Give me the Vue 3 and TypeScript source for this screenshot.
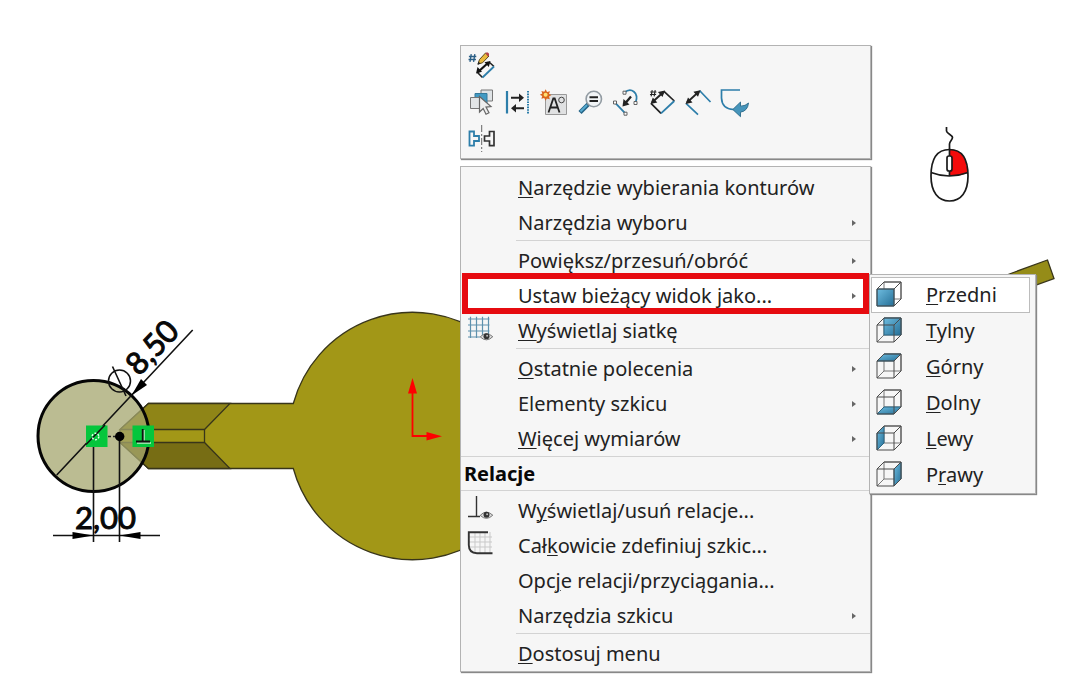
<script setup lang="ts">
interface Entry {
  label: string
  icon?: string
  sub?: boolean
  active?: boolean
}

interface Group {
  title?: string
  items: Entry[]
}

const tools: { id: string; name: string }[][] = [
  [{ id: 'autodim', name: 'Autowymiarowanie' }],
  [
    { id: 'select', name: 'Wybierz inny' },
    { id: 'flip', name: 'Zamień' },
    { id: 'note', name: 'Adnotacja' },
    { id: 'lens', name: 'Powiększ do wyboru' },
    { id: 'path', name: 'Ścieżka' },
    { id: 'smartdim', name: 'Inteligentny wymiar' },
    { id: 'chain', name: 'Łańcuch wymiarów' },
    { id: 'exit', name: 'Zakończ szkic' }
  ],
  [{ id: 'mirror', name: 'Lustro' }]
]

// An underscore precedes the access-key letter.
const groups: Group[] = [
  {
    items: [
      { label: '_Narzędzie wybierania konturów' },
      { label: 'Narzędzia wyboru', sub: true }
    ]
  },
  {
    items: [
      { label: 'Powiększ/przesuń/obróć', sub: true },
      { label: 'Ustaw bieżący widok jako...', sub: true, active: true },
      { label: '_Wyświetlaj siatkę', icon: 'grid' }
    ]
  },
  {
    items: [
      { label: '_Ostatnie polecenia', sub: true },
      { label: 'Elementy szkicu', sub: true },
      { label: '_Więcej wymiarów', sub: true }
    ]
  },
  {
    title: 'Relacje',
    items: [
      { label: 'W_yświetlaj/usuń relacje...', icon: 'relations' },
      { label: 'Cał_kowicie zdefiniuj szkic...', icon: 'define' },
      { label: 'Opc_je relacji/przyciągania...' },
      { label: 'Narzędzia szkicu', sub: true }
    ]
  },
  { items: [{ label: '_Dostosuj menu' }] }
]

const views: { label: string; face: string }[] = [
  { label: '_Przedni', face: '1,8 18,8 18,25 1,25' },
  { label: '_Tylny', face: '8,1 25,1 25,18 8,18' },
  { label: '_Górny', face: '1,8 8,1 25,1 18,8' },
  { label: '_Dolny', face: '1,25 8,18 25,18 18,25' },
  { label: '_Lewy', face: '1,8 8,1 8,18 1,25' },
  { label: 'P_rawy', face: '18,8 25,1 25,18 18,25' }
]

function parts(label: string): [string, string, string] {
  const i = label.indexOf('_')
  return i < 0 ? [label, '', ''] : [label.slice(0, i), label[i + 1], label.slice(i + 2)]
}
</script>

<template>
  <main class="stage">
    <svg class="defs" width="0" height="0" aria-hidden="true">
      <defs>
        <linearGradient id="face" x1="0" y1="0" x2="1" y2="1">
          <stop offset="0" stop-color="#6fbde0" />
          <stop offset="1" stop-color="#256f97" />
        </linearGradient>
        <symbol id="hash" viewBox="0 0 10 10">
          <path d="M3.6.8 2.2 9.2M7.6.8 6.2 9.2M1 3.3h8.2M.6 6.7h8.2" fill="none" stroke="currentColor" stroke-width="1.5" />
        </symbol>
        <symbol id="eye" viewBox="0 0 14 10">
          <path d="M.7 5.4Q6.5-1 13.3 5.2 7 11.4.7 5.4Z" fill="#ddd" stroke="#777" stroke-width="1" />
          <circle cx="7" cy="4.8" r="3" fill="#333" />
          <circle cx="7.6" cy="4.2" r="1" fill="#bbb" />
        </symbol>

        <symbol id="autodim" viewBox="0 0 36 36">
          <use href="#hash" x="5" y="5" width="9" height="10" color="#2b5f86" />
          <path d="m15 16 1.500-4.500L22.500 5l3.500 3-6.500 6.800Z" fill="#e9b93c" stroke="#5d4a1d" stroke-width="1" />
          <path d="m22.500 5 1.500-.8q2.500.5 2 3L24.800 8.500Z" fill="#b5424a" />
          <path d="m14.500 17 .8-3.500 2.300 2Z" fill="#222" />
          <path d="m14.500 24.500 5 5M26 14l5 4.500" stroke="#222" stroke-width="1.600" />
          <path d="M15 24 25.500 14.500" stroke="#111" stroke-width="2.200" />
          <path d="m13 25.500 1.500-6.500 4.500 4.700ZM27.500 13l-6 1.200 4.300 4.800Z" fill="#111" />
          <path d="M19.500 29.500 31 18.500" stroke="#2d7eaa" stroke-width="1.800" />
        </symbol>
        <symbol id="select" viewBox="0 0 36 36">
          <path d="M18 6h11.500v11H18Z" fill="#dfe3e6" stroke="#777" />
          <path d="M12 9.500h12v10H12Z" fill="#429ac3" stroke="#34799b" />
          <path d="M7.500 13.500H18v11H7.500Z" fill="#e2e5e7" stroke="#777" />
          <path d="m16.500 12.500 11.500 10-5 .6 3 5.600-3 1.500-2.800-5.700-3.700 3.500Z" fill="#eee" stroke="#666" stroke-width="1.200" />
        </symbol>
        <symbol id="flip" viewBox="0 0 36 36">
          <path d="M8 7v22.500" stroke="#2d7eaa" stroke-width="2.200" />
          <path d="M29 7v22.500" stroke="#2d7eaa" stroke-width="2" stroke-dasharray="1.600 1" />
          <path d="M12 13.700h10M15 24.300h10" stroke="#222" stroke-width="2" />
          <path d="m20 9.500 5 4.200-5 4.200ZM17 20l-5 4.300 5 4.200Z" fill="#222" />
        </symbol>
        <symbol id="note" viewBox="0 0 36 36">
          <path d="M10.500 10.500h21v20h-21Z" fill="#e0e1e2" stroke="#999" />
          <path d="m13.500 28.500 4.800-14h1.400l4.800 14M15.300 23.500h7.400" fill="none" stroke="#222" stroke-width="1.800" />
          <circle cx="26.500" cy="16" r="2.800" fill="none" stroke="#444" />
          <path d="M10.700 5.300 12 8l3-.8-1 2.800 2.500 1-2.500 1.500.8 2.700-3-.8-1.200 2.300L9.200 14l-2.800.8.800-2.800-2.400-1.300 2.500-1.100-.9-2.700 2.900.8Z" fill="#da671d" />
          <circle cx="10.600" cy="10.700" r="2" fill="#ffe072" />
        </symbol>
        <symbol id="lens" viewBox="0 0 36 36">
          <path d="m17.500 20-8.500 8.500" stroke="#256487" stroke-width="4.500" />
          <path d="m16 21-6.500 6.500" stroke="#58abd0" stroke-width="2" />
          <circle cx="22.800" cy="15" r="7.700" fill="#f1f4f6" stroke="#929ba2" stroke-width="1.600" />
          <path d="M18.500 13.300h8.500M18.500 17h8.500" stroke="#222" stroke-width="1.900" />
        </symbol>
        <symbol id="path" viewBox="0 0 36 36">
          <path d="m8 18.700 10.500 11M17.500 8.500C24 3 32.500 8.500 28.500 19" fill="none" stroke="#2d7eaa" stroke-width="1.800" />
          <path d="M6.500 17h3v3h-3ZM17 28.200h3v3h-3ZM16 7.200h3v3h-3ZM27 17.500h3v3h-3Z" fill="#fff" stroke="#555" stroke-width=".9" />
          <path d="m24 12.500-5.500 6.500" stroke="#222" stroke-width="2.300" />
          <path d="m15.500 22.500 1-7.500 6 5.500Z" fill="#222" />
        </symbol>
        <symbol id="smartdim" viewBox="0 0 36 36">
          <use href="#hash" x="6.500" y="5" width="7.500" height="8.500" color="#222" />
          <path d="m21 7.300 10.300 9.700M8 19.300l10 10" stroke="#222" stroke-width="1.700" />
          <path d="M18 29.300 31.300 17" stroke="#2d7eaa" stroke-width="1.800" />
          <path d="M9 18.500 20.500 8" stroke="#222" stroke-width="1.900" />
          <path d="M7.500 20 9.800 13.500l4.500 5ZM22 6.500 19.500 13l-4.600-5Z" fill="#222" />
        </symbol>
        <symbol id="chain" viewBox="0 0 36 36">
          <path d="m20.500 6.500 11 11.500M7 19.300l12 11.400" stroke="#2d7eaa" stroke-width="1.700" />
          <path d="M8 18.500 20 7.500" stroke="#222" stroke-width="1.800" />
          <path d="M6.500 20 9 13.500l4.500 5ZM21.500 6.300 19 12.800l-4.600-5Z" fill="#222" />
        </symbol>
        <symbol id="exit" viewBox="0 0 36 36">
          <path d="M25 6H6.500v8Q7 25 18.500 25.500" fill="none" stroke="#2d7eaa" stroke-width="1.700" />
          <path d="M17.800 25.500 25.500 18v4.200q5-.2 8-3.200-.8 8-8 9.200v4.500Z" fill="#4695bb" stroke="#286989" stroke-width=".9" />
        </symbol>
        <symbol id="mirror" viewBox="0 0 36 36">
          <path d="M6.500 11.500h4.500V16h5v5h-5v4.700H6.500Z" fill="none" stroke="#2d7eaa" stroke-width="1.800" />
          <path d="M31 11.500h-4.500V16h-5v5h5v4.700H31Z" fill="none" stroke="#333" stroke-width="1.700" />
          <path d="M18.700 5v27" stroke="#666" stroke-dasharray="7 2 2 2" />
        </symbol>

        <symbol id="grid" viewBox="0 0 28 30">
          <path d="M3.500.8V22M9.500.8V22M15.500.8V22M21.500.8V18M1 3h21.500M1 9h21.500M1 15h21.500M1 21h12" stroke="#5e91ad" stroke-width="1.200" />
          <use href="#eye" x="12.500" y="15.500" width="14" height="10" />
        </symbol>
        <symbol id="relations" viewBox="0 0 28 30">
          <path d="M9.500 0v20.500M1 20.500h12" stroke="#333" stroke-width="1.400" />
          <use href="#eye" x="12.500" y="14" width="14" height="10" />
        </symbol>
        <symbol id="define" viewBox="0 0 28 30">
          <path d="M8 1v20M13 1v21M18 1v21M23 1v21M2 6h23M2 11h23M2 16h23" stroke="#c9c9c9" />
          <path d="M21 1.200H1.800V14q0 8 8.200 8.200h15.500" fill="none" stroke="#333" stroke-width="1.900" />
        </symbol>
      </defs>
    </svg>

    <svg class="model" width="1080" height="675" viewBox="0 0 1080 675" role="img" aria-label="Szkic części z wymiarami">
      <g stroke="#38351a" stroke-width="1.300">
        <path d="M148.500 403.500H293.300A123.700 123.700 0 1 1 293.300 468.500H148.500L120 442.500V429.500Z" fill="#a29717" />
        <path d="M148.500 403.500H230L204.500 429.500H120Z" fill="#8f8517" />
        <path d="M148.500 468.500H230L204.500 442.500H120Z" fill="#776d14" />
        <path d="M204.500 429.500v13" />
        <path d="m1008 274.500 39.500-14.500 6.500 18.500-18 6.500-26-3Z" fill="#958c18" />
      </g>
      <circle cx="93.500" cy="436" r="55.500" fill="#a4a56d" fill-opacity=".75" stroke="#050505" stroke-width="3" />
      <path d="M56.700 475 192.700 330M112.500 366.500 126 396" stroke="#111" stroke-width="1.600" />
      <circle cx="119.500" cy="381" r="11" fill="none" stroke="#111" stroke-width="1.500" />
      <path d="m131.500 395.500 9.500-16.500 6 6Z" />
      <path d="M93.500 446v96M119.500 436v106M53 535.500h107" stroke="#111" stroke-width="1.600" />
      <path d="m93.500 535.500-21-3.500v7ZM119.500 535.500l21-3.500v7Z" />
      <path d="M86 425.500h21.500V447H86ZM132.500 425.500H154V447h-21.500Z" fill="#05c63c" />
      <path d="m86 444.500 19-19.500" stroke="#111" stroke-width="1.600" />
      <circle cx="95.500" cy="436.500" r="3.300" fill="none" stroke="#dfffe5" stroke-width="1.500" stroke-dasharray="2 1.500" />
      <path d="M108 436.500h9" stroke="#222" stroke-width="1.500" stroke-dasharray="3 2" />
      <circle cx="119.700" cy="436.500" r="4.700" />
      <path d="M137 443h14M144 430v12" stroke="#c2ecc9" stroke-width="1.500" />
      <path d="M136 441.500h14M142.700 429v12.500" stroke="#111" stroke-width="1.800" />
      <text class="dim" x="75" y="529">2,00</text>
      <text class="dim" transform="translate(139 377) rotate(-46.500)">8,50</text>

      <path d="M412.500 392v44H428" fill="none" stroke="#f00" stroke-width="1.800" />
      <path d="m412.500 378 4.500 15.500h-9ZM442 436.200l-15.500-4.300v8.600Z" fill="#f00" />

      <path d="M949.500 149.500C962 149 967 159 967.500 173q-8 3.500-18 3Z" fill="#f40b0b" />
      <g fill="none" stroke="#1a1a1a" stroke-width="1.700">
        <path d="M949.500 149.500C935 149.500 931 161 931 176c0 16 7 25 18.500 25S968 192 968 176c0-15-4-26.500-18.500-26.500Z" />
        <path d="M931 172.500q18 7 37 0M949.500 170v6M949.500 156v-12c0-3 3-4 3-6.500s-6-4-6-6.500v-4" />
        <rect x="947" y="156" width="5" height="15" rx="2" fill="#fff" />
      </g>
    </svg>

    <div class="popup">
      <div class="toolbar panel" role="toolbar">
        <div v-for="(row, r) in tools" :key="r" class="tool-row">
          <button v-for="tool in row" :key="tool.id" type="button" class="tool" :aria-label="tool.name">
            <svg class="tool-icon" aria-hidden="true"><use :href="'#' + tool.id" /></svg>
          </button>
        </div>
      </div>

      <div class="menu panel" role="menu">
        <section v-for="(group, g) in groups" :key="g" class="group" :class="{ titled: group.title }">
          <h2 v-if="group.title" class="title">{{ group.title }}</h2>
          <div class="items">
            <button v-for="item in group.items" :key="item.label" type="button" role="menuitem" class="item" :class="{ active: item.active }">
              <span class="icon-cell">
                <svg v-if="item.icon" class="item-icon" aria-hidden="true"><use :href="'#' + item.icon" /></svg>
              </span>
              <span class="label">{{ parts(item.label)[0] }}<u>{{ parts(item.label)[1] }}</u>{{ parts(item.label)[2] }}</span>
              <svg v-if="item.sub" class="chevron" viewBox="0 0 4 6" aria-hidden="true"><path d="M0 0 4 3 0 6Z" fill="#666" /></svg>
            </button>
          </div>
        </section>
      </div>

      <div class="submenu panel" role="menu">
        <button v-for="(view, i) in views" :key="view.label" type="button" role="menuitem" class="view" :class="{ current: i === 0 }">
          <svg class="cube" viewBox="0 0 28 28" aria-hidden="true">
            <path d="M8 1h17v17H8ZM1 25l7-7" fill="none" stroke="#777" />
            <polygon :points="view.face" fill="url(#face)" stroke="#2c6683" />
            <path d="M1 8h17v17H1ZM1 8l7-7h17l-7 7M18 25l7-7V1" fill="none" stroke="#4a4a4a" />
          </svg>
          <span class="label">{{ parts(view.label)[0] }}<u>{{ parts(view.label)[1] }}</u>{{ parts(view.label)[2] }}</span>
        </button>
      </div>
    </div>
  </main>
</template>

<style>
body {
  background: #fff;
}
</style>

<style scoped>
.stage {
  position: relative;
  min-height: 100vh;
  overflow: hidden;
  font-family: "Noto Sans", "Open Sans", sans-serif;
  font-size: 20px;
  color: #222;
}

.defs {
  position: absolute;
}

.model {
  position: absolute;
  top: 0;
  left: 0;
}

.dim {
  font-family: Lato, sans-serif;
  font-size: 31px;
  fill: #080808;
  stroke: #080808;
  stroke-width: 1px;
}

.popup {
  position: absolute;
  top: 45px;
  left: 460px;
  width: 411px;
  display: flex;
  flex-direction: column;
  gap: 7px;
}

.panel {
  box-sizing: border-box;
  background: #f6f6f6;
  border: 1px solid #b3b3b3;
  box-shadow: 1px 1px 1px #888;
}

.toolbar {
  padding: 2px;
}

.tool-row {
  display: flex;
}

button {
  margin: 0;
  padding: 0;
  border: 0;
  background: none;
  font: inherit;
  color: inherit;
  text-align: left;
}

.tool,
.tool-icon {
  display: block;
  width: 36px;
  height: 36px;
}

.menu {
  padding-top: 1px;
}

.items {
  padding-top: 2px;
}

.group + .group .items {
  margin-left: 55px;
  border-top: 1px solid #d3d3d3;
}

.group + .group .item {
  width: calc(100% + 55px);
  margin-left: -55px;
}

.group.titled .items {
  margin-left: 0;
}

.group.titled .item {
  width: 100%;
  margin-left: 0;
}

.title {
  margin: 0;
  padding-left: 3px;
  border-top: 1px solid #d3d3d3;
  font-size: 20px;
  line-height: 33px;
  font-weight: 700;
  color: #080808;
}

.item {
  position: relative;
  display: flex;
  align-items: center;
  width: 100%;
  height: 35px;
}

.icon-cell {
  width: 51px;
  padding-left: 6px;
}

.item-icon {
  display: block;
  width: 28px;
  height: 30px;
}

.label {
  flex: 1;
  line-height: 34px;
  white-space: nowrap;
}

u {
  text-decoration-thickness: 1px;
  text-underline-offset: 2px;
}

.chevron {
  width: 4px;
  height: 6px;
  margin-right: 14px;
}

.item.active::before {
  content: "";
  position: absolute;
  inset: -5px 1px -1px 1px;
  background: #fff;
  border: 6px solid #e60b10;
}

.item.active > * {
  position: relative;
}

.submenu {
  position: absolute;
  top: 229px;
  left: 409px;
  width: 167px;
  padding: 2px 5px 0 1px;
}

.view {
  display: flex;
  align-items: center;
  gap: 22px;
  width: 100%;
  height: 36px;
  padding-left: 4px;
  border: 1px solid transparent;
}

.view.current {
  background: #fff;
  border-color: #bcbcbc;
}

.cube {
  width: 28px;
  height: 28px;
}
</style>
